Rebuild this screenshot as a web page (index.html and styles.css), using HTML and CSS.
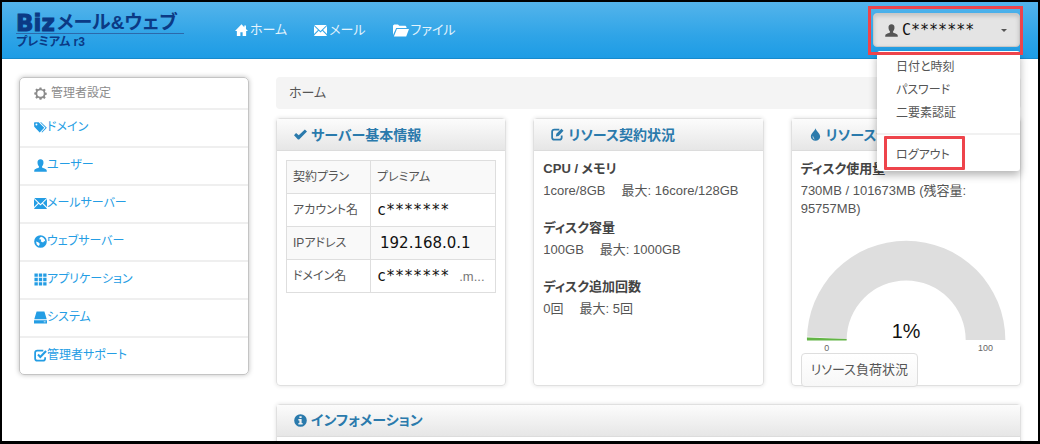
FILE: index.html
```html
<!DOCTYPE html>
<html lang="ja">
<head>
<meta charset="utf-8">
<meta name="viewport" content="width=device-width, initial-scale=1">
<title>Bizメール&amp;ウェブ プレミアム r3</title>
<link rel="stylesheet" href="styles.css">
</head>
<body>
<svg class="sprite" aria-hidden="true">
  <symbol id="home" viewBox="0 0 14 14"><path d="M7 .3 0 7.6h2V13h3.8V8.8h2.4V13H12V7.6h2l-2.2-2.300V1.500H10v1.900z"/></symbol>
  <symbol id="mail" viewBox="0 0 14 12"><path d="M.3 0h13.400L7 6.600zM0 1.200 4.300 5.500 0 9.800zM14 1.200v8.600L9.700 5.500zM5.100 6.300 7 8.200l1.900-1.900L13.700 11v1H.3v-1z"/></symbol>
  <symbol id="folder" viewBox="0 0 16 13"><path d="M0 11V1.500L1.200.5H5l1.300 1.300h6.200L13.500 3v1H3.200zM3.900 5H16l-2.800 7.500H.9z"/></symbol>
  <symbol id="user" viewBox="0 0 14 14"><path d="M7 .4c2.200 0 3.400 1.600 3.200 3.800-.1 1.700-.8 2.900-1.500 3.700v1.300c.8.8 4.800 1.300 5 3.200l.1 1.200H.2l.1-1.200c.2-1.900 4.200-2.400 5-3.200V7.900C4.600 7.100 3.900 5.900 3.800 4.200 3.600 2 4.800.4 7 .4z"/></symbol>
  <symbol id="gear" viewBox="0 0 14 14"><path fill-rule="evenodd" d="m6 .5 2 0 .4 1.700 1.300.5 1.500-.9 1.400 1.400-.9 1.500.5 1.300 1.500.3v2l-1.500.3-.5 1.300.9 1.500-1.400 1.400-1.500-.9-1.300.5L8 13.700H6l-.4-1.500-1.300-.5-1.500.9-1.400-1.400.9-1.500-.5-1.300L.3 8V6l1.500-.3.5-1.300-.9-1.500 1.400-1.400 1.500.9 1.300-.5zM7 3.500a3.500 3.500 0 1 0 0 7 3.500 3.500 0 0 0 0-7z"/></symbol>
  <symbol id="tags" viewBox="0 0 16 14"><path fill-rule="evenodd" d="M0 1.200 1 .4h4.800L12.600 7.200 7 13 .3 6.200zM3 2a1.200 1.200 0 1 0 0 2.400A1.200 1.200 0 0 0 3 2zM7.500.4h1.300L15.800 7.200 10 13.200 9.200 12.400 14.200 7.200z"/></symbol>
  <symbol id="globe" viewBox="0 0 14 14"><path fill-rule="evenodd" d="M7 .2a6.800 6.800 0 1 0 0 13.600A6.800 6.800 0 0 0 7 .2zm.6 1.600 2.100.9 1.800 2 .7 2.300-1.400-.6-.6 1.300-1.300.2L7.200 6.600l.6-1.300-1-.8-1 .4.200-1.600zM2.200 7l2.300.7 1.600 1.500-.2 1.500-1 1.100L3 10.100z"/></symbol>
  <symbol id="grid" viewBox="0 0 14 14"><path d="M.5.500h3.600v3.600H.500zM5.200.500h3.600v3.600H5.200zM9.900.500h3.600v3.600H9.900zM.5 5.200h3.600v3.600H.500zM5.200 5.200h3.600v3.600H5.200zM9.900 5.200h3.600v3.600H9.900zM.5 9.900h3.600v3.600H.500zM5.200 9.900h3.600v3.600H5.200zM9.900 9.900h3.600v3.600H9.900z"/></symbol>
  <symbol id="drive" viewBox="0 0 14 14"><path fill-rule="evenodd" d="M2.800.500h8.400L13.700 9H.3zM0 10h14v3.500H0zM10.500 11.200v1h2v-1z"/></symbol>
  <symbol id="check" viewBox="0 0 14 14"><path d="M10 1.700H3.600Q1.200 1.700 1.200 4.100v6.100q0 2.400 2.400 2.400h6q2.400 0 2.400-2.400V9" fill="none" stroke="currentColor" stroke-width="1.900"/><path d="m4.300 6 2.500 2.600L13 2.200" fill="none" stroke="currentColor" stroke-width="2.200"/></symbol>
  <symbol id="edit" viewBox="0 0 14 14"><path d="M9 1.700H3.600Q1.200 1.700 1.200 4.100v6.100q0 2.400 2.400 2.400h5.500q2.400 0 2.400-2.400V8" fill="none" stroke="currentColor" stroke-width="1.900"/><path d="m5.200 9.200.6-3L11.200.800l2.300 2.200-5.400 5.500z"/></symbol>
  <symbol id="ok" viewBox="0 0 14 12"><path d="M0 6.700 2.200 4.500l2.900 2.400L11.700.500 14 2.700 5.500 11.500H4.300z"/></symbol>
  <symbol id="drop" viewBox="0 0 12 14"><path fill-rule="evenodd" d="M6 .2c.6 2.700 5 5.500 5 9a5 4.600 0 0 1-10 0c0-3.500 4.400-6.300 5-9zM3.300 8c-1 2 .1 4 2.200 4.300C4.300 11.300 3.500 10 3.300 8z"/></symbol>
  <symbol id="info" viewBox="0 0 14 14"><path fill-rule="evenodd" d="M7 .2a6.800 6.800 0 1 0 0 13.600A6.800 6.800 0 0 0 7 .2zM5.800 2.300h2.400v1.900H5.800zM4.700 5.400h3.500v4.300h1.100v1.500H4.700V9.700h1.100V6.900H4.700z"/></symbol>
</svg>
<div class="page">
  <header class="topbar">
    <div class="brand">
      <div class="brand-name"><span class="brand-biz">Biz</span>メール&amp;ウェブ</div>
      <div class="brand-sub">プレミアム r3</div>
    </div>
    <nav class="nav">
      <a href="#home"><svg class="icon"><use href="#home"/></svg>ホーム</a>
      <a href="#mail"><svg class="icon"><use href="#mail"/></svg>メール</a>
      <a href="#file"><svg class="icon icon-wide"><use href="#folder"/></svg>ファイル</a>
    </nav>
    <div class="account">
      <button class="account-button" type="button" aria-expanded="true">
        <svg class="icon"><use href="#user"/></svg><span class="masked">C*******</span><span class="caret"></span>
      </button>
      <ul class="menu">
        <li><a href="#date">日付と時刻</a></li>
        <li><a href="#password">パスワード</a></li>
        <li><a href="#twofactor">二要素認証</a></li>
        <li class="menu-logout"><a href="#logout">ログアウト</a></li>
      </ul>
    </div>
  </header>
  <div class="layout">
    <aside class="sidebar">
      <div class="sidebar-title"><svg class="icon"><use href="#gear"/></svg>管理者設定</div>
      <a href="#domain"><svg class="icon"><use href="#tags"/></svg>ドメイン</a>
      <a href="#users"><svg class="icon"><use href="#user"/></svg>ユーザー</a>
      <a href="#mailserver"><svg class="icon"><use href="#mail"/></svg>メールサーバー</a>
      <a href="#webserver"><svg class="icon"><use href="#globe"/></svg>ウェブサーバー</a>
      <a href="#apps"><svg class="icon"><use href="#grid"/></svg>アプリケーション</a>
      <a href="#system"><svg class="icon"><use href="#drive"/></svg>システム</a>
      <a href="#support"><svg class="icon"><use href="#check"/></svg>管理者サポート</a>
    </aside>
    <main class="content">
      <div class="breadcrumb">ホーム</div>
      <div class="cards">
        <section class="card">
          <h2><svg class="icon"><use href="#ok"/></svg>サーバー基本情報</h2>
          <div class="card-body">
            <table class="facts">
              <tr><th scope="row">契約プラン</th><td>プレミアム</td></tr>
              <tr><th scope="row">アカウント名</th><td><span class="masked">c*******</span></td></tr>
              <tr><th scope="row">IPアドレス</th><td><span class="address">192.168.0.1</span></td></tr>
              <tr><th scope="row">ドメイン名</th><td><span class="masked">c*******</span><span class="suffix">.m...</span></td></tr>
            </table>
          </div>
        </section>
        <section class="card">
          <h2><svg class="icon"><use href="#edit"/></svg>リソース契約状況</h2>
          <div class="card-body">
            <h3>CPU / メモリ</h3>
            <p><span>1core/8GB</span><span>最大: 16core/128GB</span></p>
            <h3>ディスク容量</h3>
            <p><span>100GB</span><span>最大: 1000GB</span></p>
            <h3>ディスク追加回数</h3>
            <p><span>0回</span><span>最大: 5回</span></p>
          </div>
        </section>
        <section class="card">
          <h2><svg class="icon"><use href="#drop"/></svg>リソース使用状況</h2>
          <div class="card-body card-usage">
            <h3>ディスク使用量</h3>
            <div>730MB / 101673MB (残容量: 95757MB)</div>
            <svg class="gauge" viewBox="0 0 212 136" role="img" aria-label="1%">
              <path d="M6 123a100 100 0 0 1 200 0h-40a60 60 0 0 0-120 0z" fill="#dedede"/>
              <path d="M6 119.500 46 122v1H6z" fill="#f4f8f2"/>
              <path d="M6 120.500 46 122v1.500H6z" fill="#63b446"/>
              <text class="gauge-value" x="106" y="121">1%</text>
              <text class="gauge-label" x="26" y="134">0</text>
              <text class="gauge-label" x="186" y="134">100</text>
            </svg>
            <button class="load-button" type="button">リソース負荷状況</button>
          </div>
        </section>
      </div>
      <section class="card">
        <h2><svg class="icon"><use href="#info"/></svg>インフォメーション</h2>
        <div class="card-body"></div>
      </section>
    </main>
  </div>
</div>
</body>
</html>
```

FILE: styles.css
```css
* { box-sizing: border-box; }
body {
  margin: 0;
  color: #555;
  background: #fff;
  font: 13px/18px "Liberation Sans", "Noto Sans CJK JP", sans-serif;
  font-feature-settings: "palt";
}
a { color: inherit; text-decoration: none; }
button { font: inherit; color: inherit; }
.sprite { display: none; }
.icon { flex: none; width: 13px; height: 13px; fill: currentColor; }
.icon-wide { width: 16px; }

.page {
  height: 100vh;
  overflow: hidden;
  border: 2px solid #000;
  border-bottom-width: 3px;
}

.topbar {
  display: flex;
  align-items: center;
  height: 57px;
  padding: 0 18px 0 14px;
  border-bottom: 1px solid #178acc;
  background: linear-gradient(#54b4eb, #2fa4e7 60%, #1d9ce5);
}
.brand { width: 219px; padding-top: 2px; color: #0b3a85; font-weight: 700; }
.brand-name {
  display: flex;
  align-items: center;
  width: 168px;
  height: 20px;
  font-size: 19px;
  line-height: 20px;
  white-space: nowrap;
  border-bottom: 1px solid #2c69ab;
}
.brand-biz {
  margin-right: 2px;
  font-family: "DejaVu Sans", sans-serif;
  font-size: 23px;
  -webkit-text-stroke: 1px #0b3a85;
}
.brand-sub { padding-top: 1px; font-size: 12px; line-height: 14px; }
.nav { display: flex; gap: 27px; color: #e4f3fc; }
.nav a { display: flex; align-items: center; gap: 2px; }
.nav .icon { color: #fff; }

.account {
  position: relative;
  margin-left: auto;
}
.account::after {
  content: "";
  position: absolute;
  z-index: 2;
  inset: -7px -3px -8px -5px;
  border: 3px solid #ee444b;
  pointer-events: none;
}
.account-button {
  display: flex;
  align-items: center;
  gap: 4px;
  width: 147px;
  height: 34px;
  padding: 0 12px 0 11px;
  border: 1px solid #c8c8c8;
  border-radius: 4px;
  background: #e4e4e4;
  box-shadow: inset 0 2px 4px rgba(0, 0, 0, .15);
}
.masked {
  color: #111;
  font: 15px/18px "DejaVu Sans Mono", monospace;
}
.caret {
  margin-left: auto;
  border: 3px solid transparent;
  border-top-color: #555;
  border-bottom: 0;
}
.menu {
  position: absolute;
  z-index: 1;
  top: 38px;
  right: 0;
  width: 143px;
  margin: 0;
  padding: 5px 0 4px;
  list-style: none;
  font-size: 12px;
  background: #fff;
  border-radius: 3px;
  box-shadow: 0 4px 9px rgba(0, 0, 0, .3);
}
.menu a { display: block; padding-left: 19px; line-height: 23px; }
.menu-logout {
  position: relative;
  margin-top: 8px;
  padding-top: 9px;
  border-top: 2px solid #f1f1f1;
}
.menu-logout::after {
  content: "";
  position: absolute;
  inset: 1px 55px -3px 7px;
  border: 3px solid #ee444b;
  border-radius: 1px;
  pointer-events: none;
}

.layout {
  display: grid;
  grid-template-columns: 230px 1fr;
  align-items: start;
  gap: 27px;
  padding: 18px 17px 0;
}
.sidebar {
  border: 1px solid #c4c4c4;
  border-radius: 5px;
  font-size: 12px;
  box-shadow: 0 0 5px rgba(0, 0, 0, .25);
}
.sidebar-title, .sidebar a {
  display: flex;
  align-items: center;
  padding-left: 14px;
}
.sidebar-title { gap: 4px; height: 30px; color: #8c8c8c; }
.sidebar a {
  height: 38px;
  padding-bottom: 2px;
  border-top: 2px solid #efefef;
  color: #249de4;
}
.breadcrumb {
  margin-bottom: 9px;
  padding: 7px 13px;
  border-radius: 4px;
  background: #f4f4f4;
}
.cards {
  display: grid;
  grid-template-columns: repeat(3, 1fr);
  gap: 27px;
  margin-bottom: 18px;
}
.card {
  min-width: 0;
  border: 1px solid #e0e0e0;
  border-radius: 4px;
  box-shadow: 0 0 4px rgba(0, 0, 0, .12);
}
.card h2 {
  display: flex;
  align-items: center;
  gap: 4px;
  height: 32px;
  margin: 0;
  padding-left: 17px;
  border-bottom: 1px solid #dcdcdc;
  color: #2a7aac;
  background: linear-gradient(#fcfcfc, #e6e6e6);
  font-size: 14px;
}
.card-body { min-height: 20px; padding: 9px; }
.card-usage { padding-bottom: 0; }
.card h3 { margin: 0 0 4px; color: #444; font-size: 13px; line-height: 18px; }
.card p { display: flex; gap: 16px; margin: 0 0 19px; }
.facts {
  width: 100%;
  border-collapse: collapse;
  table-layout: fixed;
  font-size: 12px;
}
.facts th, .facts td {
  height: 33px;
  padding: 0 6px;
  border: 1px solid #dedede;
  font-weight: 400;
  text-align: left;
  white-space: nowrap;
}
.facts th { width: 84px; }
.facts tr:nth-child(odd) { background: #f9f9f9; }
.address { padding-left: 3px; color: #111; font: 15px/18px "DejaVu Sans", sans-serif; }
.suffix { margin-left: 10px; color: #777; font-size: 13px; }
.gauge { display: block; width: 100%; }
.gauge text { text-anchor: middle; }
.gauge-value { font-size: 20px; fill: #111; }
.gauge-label { font-size: 9px; fill: #666; }
.load-button {
  display: block;
  height: 34px;
  margin-bottom: -2px;
  padding: 0 9px;
  border: 1px solid #dedede;
  border-radius: 4px;
  background: linear-gradient(#fff, #f7f7f7);
}
```
